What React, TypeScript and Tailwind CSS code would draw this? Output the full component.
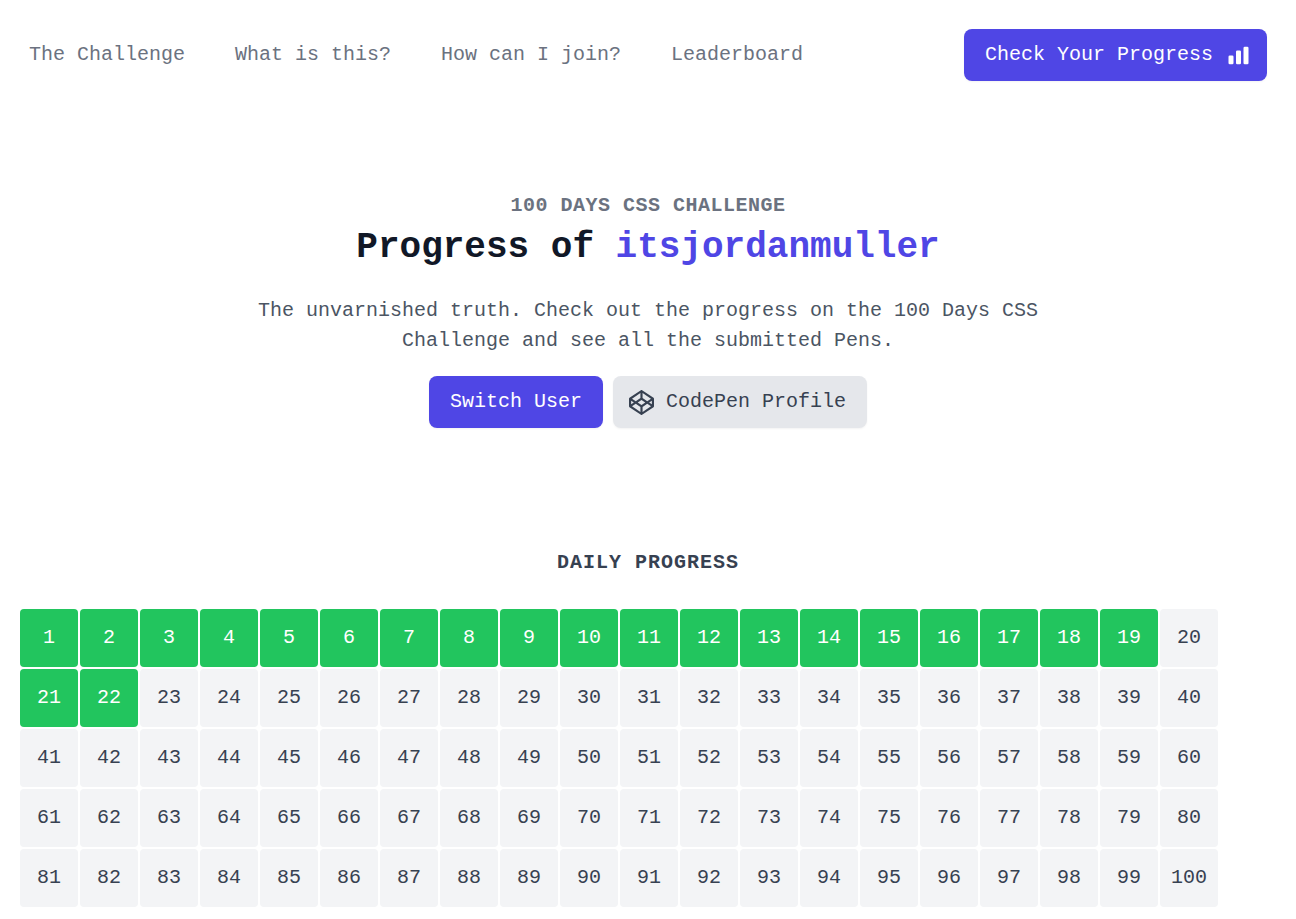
import { FaCodepen } from "react-icons/fa";

const navLinks = ["The Challenge", "What is this?", "How can I join?", "Leaderboard"];

const completed = new Set([...Array.from({ length: 19 }, (_, i) => i + 1), 21, 22]);

const days = Array.from({ length: 100 }, (_, i) => i + 1);

function ChartBarIcon() {
  return (
    <svg viewBox="0 0 20 20" fill="currentColor" className="ml-[13px] -mr-[5px] size-[25px]" aria-hidden="true">
      <path d="M2 11a1 1 0 011-1h2a1 1 0 011 1v5a1 1 0 01-1 1H3a1 1 0 01-1-1v-5zM8 7a1 1 0 011-1h2a1 1 0 011 1v9a1 1 0 01-1 1H9a1 1 0 01-1-1V7zM14 4a1 1 0 011-1h2a1 1 0 011 1v12a1 1 0 01-1 1h-2a1 1 0 01-1-1V4z" />
    </svg>
  );
}

export default function App() {
  return (
    <div className="bg-white font-['Liberation_Mono',monospace] text-xl leading-[30px] text-[#111827]">
      <header className="flex items-center justify-between px-[29px] pt-[29px]">
        <nav className="flex gap-[50px]">
          {navLinks.map((label) => (
            <a key={label} href="#" className="text-[#6b7280] hover:text-[#111827]">
              {label}
            </a>
          ))}
        </nav>
        <a
          href="#"
          className="flex h-[52px] items-center rounded-lg bg-[#4f46e5] px-[21px] text-white shadow-xs hover:bg-[#4338ca]"
        >
          Check Your Progress
          <ChartBarIcon />
        </a>
      </header>

      <main>
        <section className="flex flex-col items-center px-5 pt-[110px] text-center">
          <h2 className="font-semibold tracking-wide text-[#6b7280] uppercase">100 Days CSS Challenge</h2>
          <h1 className="mt-[2px] text-4xl leading-[50px] font-extrabold">
            Progress of <span className="text-[#4f46e5]">itsjordanmuller</span>
          </h1>
          <p className="mt-[23px] max-w-[840px] text-[#4b5563]">
            The unvarnished truth. Check out the progress on the 100 Days CSS Challenge and see all the submitted Pens.
          </p>
          <div className="mt-5 flex gap-[10px]">
            <button
              type="button"
              className="flex h-[52px] items-center rounded-lg bg-[#4f46e5] px-[21px] text-white shadow-xs hover:bg-[#4338ca]"
            >
              Switch User
            </button>
            <a
              href="#"
              className="flex h-[52px] items-center rounded-lg bg-[#e5e7eb] px-[21px] text-[#374151] shadow-xs hover:bg-[#d1d5db]"
            >
              <FaCodepen className="mr-3 -ml-[5px] size-[25px]" aria-hidden="true" />
              CodePen Profile
            </a>
          </div>
        </section>

        <section className="px-5 pt-[120px] pb-3">
          <h2 className="text-center font-semibold tracking-wider text-[#374151] uppercase">Daily Progress</h2>
          <ol className="mt-[31px] flex flex-wrap gap-[2px]">
            {days.map((day) => (
              <li
                key={day}
                className={
                  completed.has(day)
                    ? "flex size-[58px] items-center justify-center rounded bg-[#22c55e] text-white"
                    : "flex size-[58px] items-center justify-center rounded bg-[#f3f4f6] text-[#374151]"
                }
              >
                {day}
              </li>
            ))}
          </ol>
        </section>
      </main>
    </div>
  );
}
